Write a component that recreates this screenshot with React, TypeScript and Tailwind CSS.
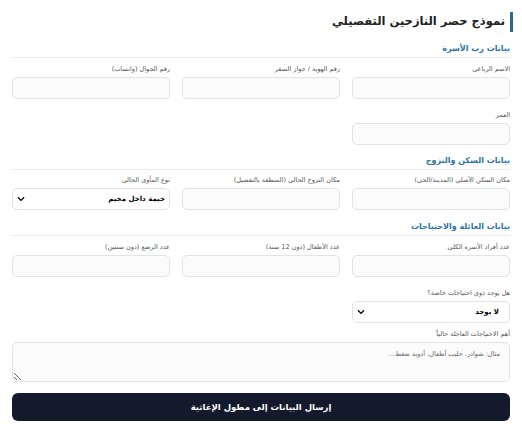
import React from "react";
import { FaChevronDown } from "react-icons/fa";

function Label({ children }: { children: React.ReactNode }) {
  return <div className="text-[6.5px] leading-[10px] text-[#555] mb-[3px] whitespace-nowrap">{children}</div>;
}

function Input({ label }: { label: string }) {
  return (
    <div className="flex flex-col">
      <Label>{label}</Label>
      <input readOnly className="h-[22px] rounded-[5px] border border-[#e3e3e3] bg-[#fbfbfb] outline-none" />
    </div>
  );
}

function Select({ label, value, pad }: { label: string; value: string; pad: "sm" | "lg" }) {
  return (
    <div className="flex flex-col">
      <Label>{label}</Label>
      <div className="h-[22px] rounded-[5px] border border-[#e3e3e3] bg-white flex items-center justify-between pl-[4px] pr-[4px]">
        <span className={pad === "lg" ? "text-[7px] font-bold text-black mr-[6px]" : "text-[7px] font-bold text-black"}>{value}</span>
        <FaChevronDown className="text-black w-[8px] h-[8px]" />
      </div>
    </div>
  );
}

function SectionHeader({ children }: { children: React.ReactNode }) {
  return (
    <div className="text-[8px] leading-[12px] pb-[2px] border-b border-[#ebebeb] text-[#2a72a3] font-bold">
      {children}
    </div>
  );
}

export default function App() {
  return (
    <div dir="rtl" className="w-[522px] h-[429px] bg-white px-[12px] pt-[12px] font-['DejaVu_Sans',sans-serif] overflow-hidden">
      <div className="h-[20px] flex items-center -mr-[3px] border-r-[3px] border-[#2b6a8e] pr-[5px]">
        <span className="text-[11.5px] font-bold text-[#222]">نموذج حصر النازحين التفصيلي</span>
      </div>

      <div className="mt-[11px]">
        <SectionHeader>بيانات رب الأسرة</SectionHeader>
        <div className="mt-[6px] grid grid-cols-3 gap-x-[12px] gap-y-[11px]">
          <Input label="الاسم الرباعي" />
          <Input label="رقم الهوية / جواز السفر" />
          <Input label="رقم الجوال (واتساب)" />
          <Input label="العمر" />
        </div>
      </div>

      <div className="mt-[10px]">
        <SectionHeader>بيانات السكن والنزوح</SectionHeader>
        <div className="mt-[5px] grid grid-cols-3 gap-x-[12px] gap-y-[11px]">
          <Input label="مكان السكن الأصلي (المدينة/الحي)" />
          <Input label="مكان النزوح الحالي (المنطقة بالتفصيل)" />
          <Select label="نوع المأوى الحالي" value="خيمة داخل مخيم" pad="sm" />
        </div>
      </div>

      <div className="mt-[11px]">
        <SectionHeader>بيانات العائلة والاحتياجات</SectionHeader>
        <div className="mt-[6px] grid grid-cols-3 gap-x-[12px] gap-y-[11px]">
          <Input label="عدد أفراد الأسرة الكلي" />
          <Input label="عدد الأطفال (دون 12 سنة)" />
          <Input label="عدد الرضع (دون سنتين)" />
          <Select label="هل يوجد ذوي احتياجات خاصة؟" value="لا يوجد" pad="lg" />
        </div>
        <div className="mt-[6px] flex flex-col">
          <Label>أهم الاحتياجات العاجلة حالياً</Label>
          <textarea
            readOnly
            placeholder="مثال: شوادر، حليب أطفال، أدوية ضغط..."
            className="h-[40px] rounded-[5px] border border-[#e3e3e3] bg-[#fbfbfb] outline-none px-[9px] pt-[6px] text-[6.5px] leading-[10px] font-['DejaVu_Sans',sans-serif] placeholder:text-[#666]"
          />
        </div>
      </div>

      <button className="mt-[11px] w-full h-[28px] rounded-[6px] bg-[#131a2b] text-white text-[8.5px] font-bold flex items-center justify-center">
        إرسال البيانات إلى مطول الإغاثية
      </button>
    </div>
  );
}
